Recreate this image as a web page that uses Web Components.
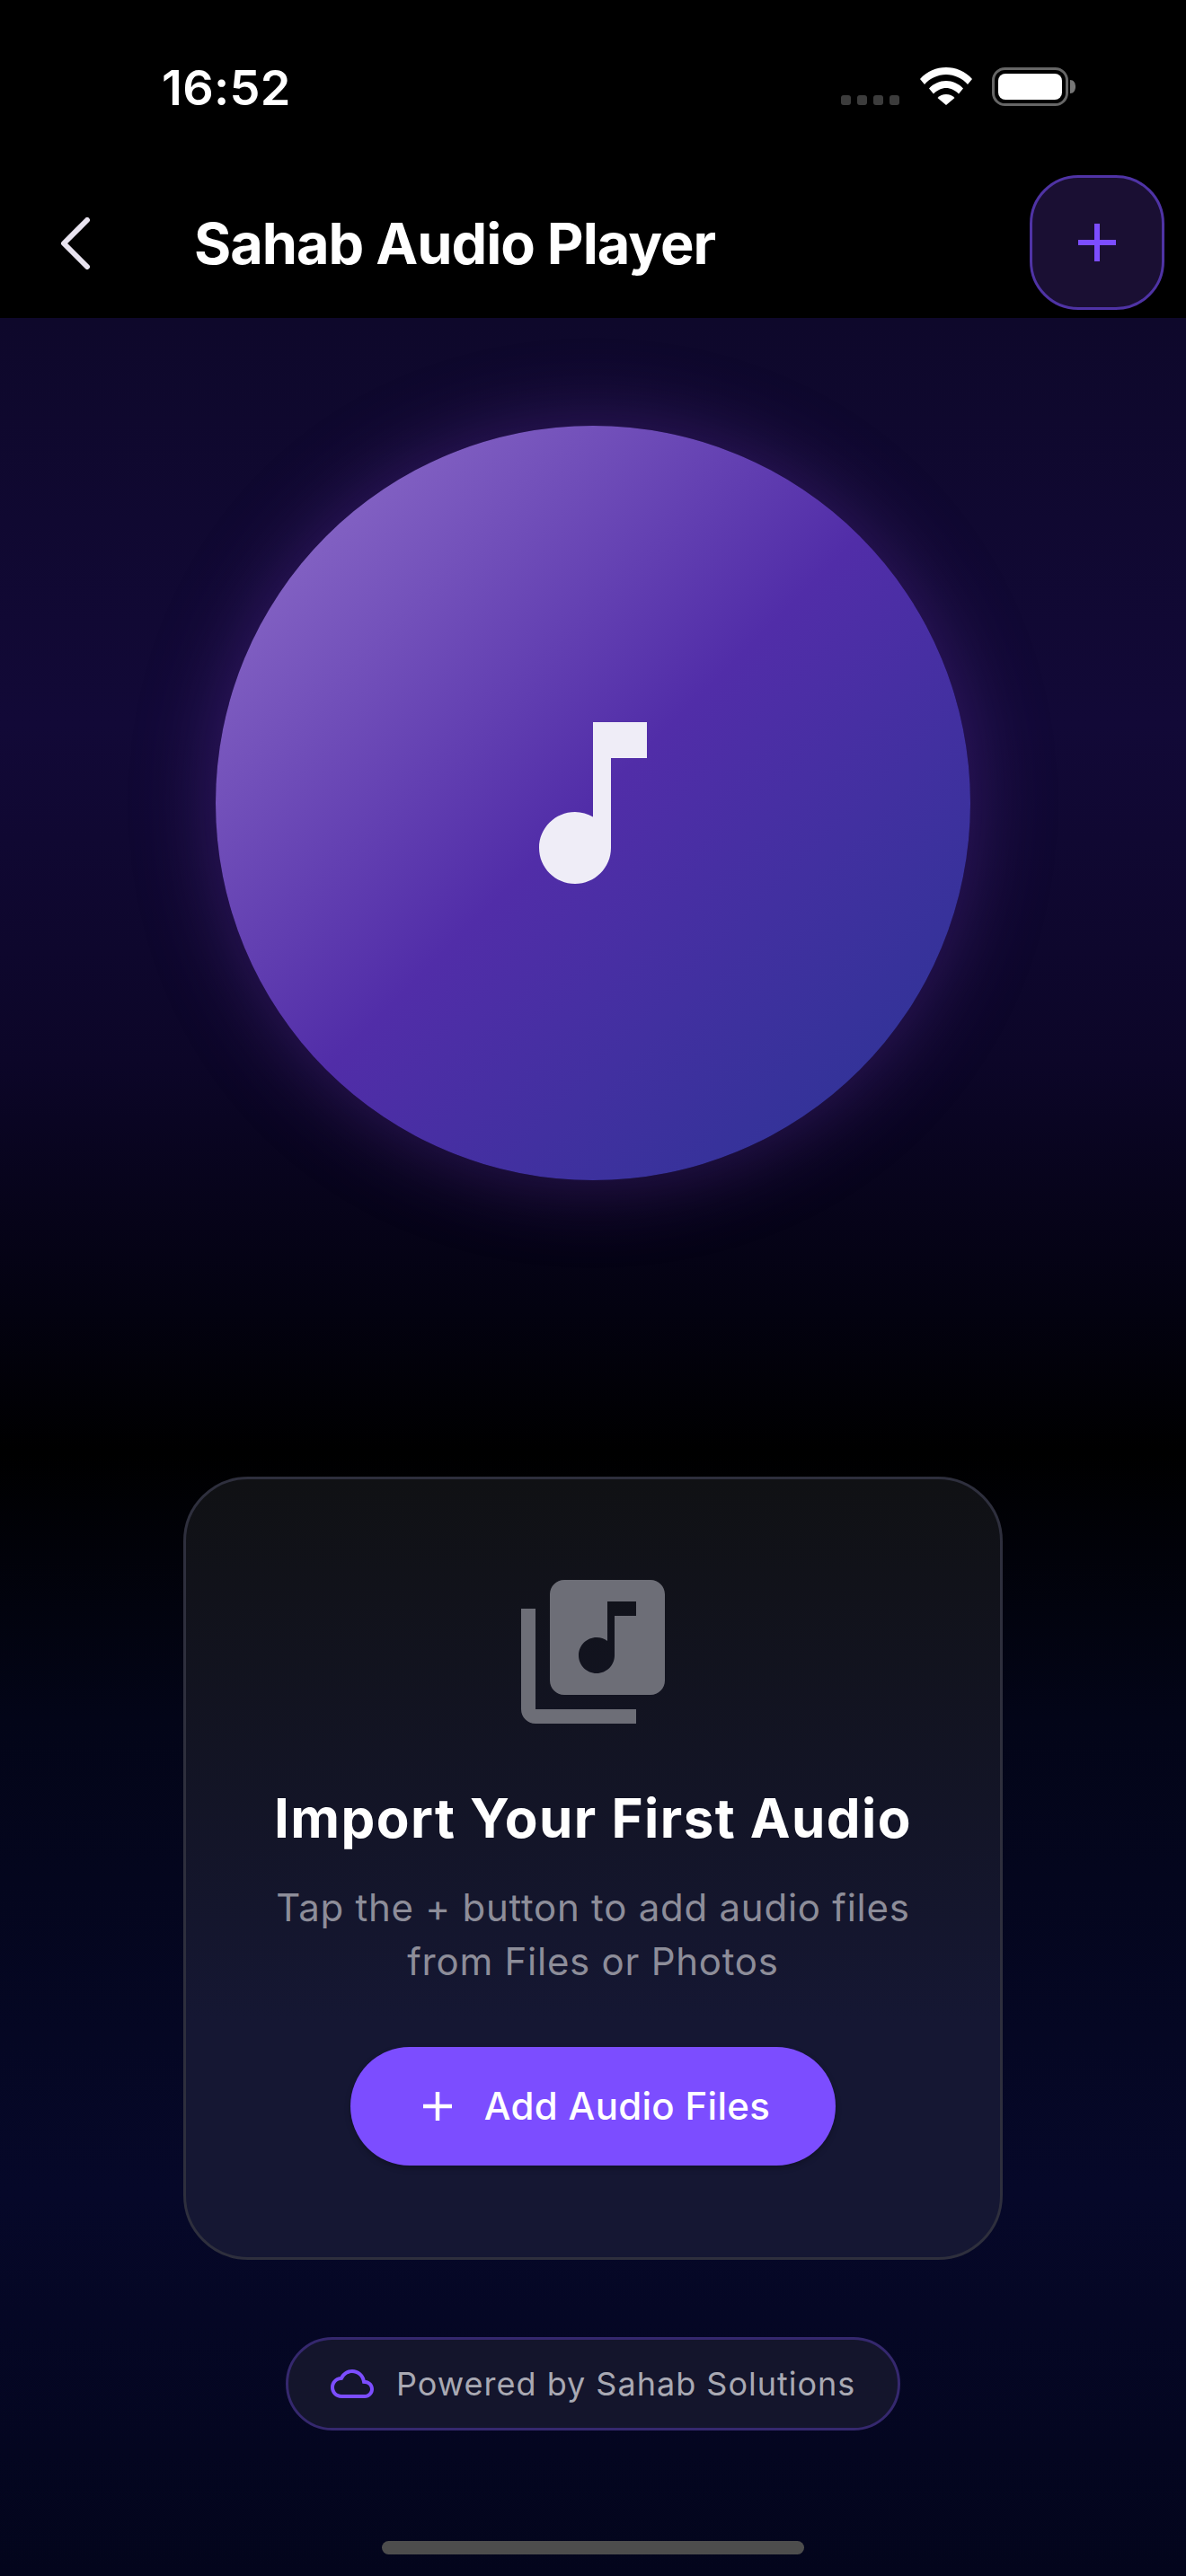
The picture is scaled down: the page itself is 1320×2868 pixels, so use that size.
<!DOCTYPE html>
<html>
<head>
<meta charset="utf-8">
<title>Sahab Audio Player</title>
<style>
  html, body { margin: 0; padding: 0; background: #000; }
  body { width: 1320px; height: 2868px; overflow: hidden; font-family: Inter, "Liberation Sans", sans-serif; }
</style>
</head>
<body>
<audio-app>
  <status-bar slot="top" time="16:52"></status-bar>
  <app-header slot="top" heading="Sahab Audio Player"></app-header>
  <disc-art></disc-art>
  <import-card heading="Import Your First Audio" action="Add Audio Files">
    Tap the + button to add audio files<br>from Files or Photos
  </import-card>
  <powered-pill>Powered by Sahab Solutions</powered-pill>
  <home-bar></home-bar>
</audio-app>

<script>
const appTemplate = document.createElement("template");
appTemplate.innerHTML = `
<style>
:host { display: flex; flex-direction: column; width: 1320px; height: 2868px; background: #000; }
main {
  flex: 1;
  display: flex;
  flex-direction: column;
  align-items: center;
  background: linear-gradient(180deg, #0e082b 0%, #120937 18%, #0c0628 33%, #030210 44%, #000 50.2%, #030518 62%, #060829 83%, #03051c 100%);
}
</style>
<slot name="top"></slot>
<main><slot></slot></main>`;

class AudioApp extends HTMLElement {
  constructor() {
    super();
    this.attachShadow({ mode: "open" });
    this.shadowRoot.appendChild(appTemplate.content.cloneNode(true));
  }
}
customElements.define("audio-app", AudioApp);

const statusTemplate = document.createElement("template");
statusTemplate.innerHTML = `
<style>
:host { display: flex; align-items: flex-start; height: 180px; background: #000; position: relative; }
.time { margin: 69px 0 0 180px; font: 600 54px/58px Inter, sans-serif; color: #fff; letter-spacing: 0.3px; }
.right { margin-left: auto; margin-right: 122px; margin-top: 75px; display: flex; align-items: flex-start; }
.dots { display: flex; gap: 7px; margin: 31px 23px 0 0; }
.dots i { width: 11px; height: 11px; border-radius: 3px; background: #3c3c3c; }
svg { display: block; }
</style>
<div class="time"></div>
<div class="right">
  <div class="dots"><i></i><i></i><i></i><i></i></div>
  <svg width="58" height="42" viewBox="0 0 58 42" style="margin-right:22px">
    <path fill="#fff" d="M29 0C18 0 8 4 0 13l5 6C11 12 20 8 29 8s18 4 24 11l5-6C50 4 40 0 29 0Z"/>
    <path fill="#fff" d="M29 15c-7 0-14 3-19 8.500l5 6c4-4 9-6.500 14-6.500s10 2.500 14 6.500l5-6C43 18 36 15 29 15Z"/>
    <path fill="#fff" d="M29 30c-4 0-7 1.500-9.500 4L29 42l9.500-8c-2.500-2.500-5.500-4-9.500-4Z"/>
  </svg>
  <svg width="94" height="43" viewBox="0 0 94 43">
    <rect x="1.500" y="1.500" width="82" height="40" rx="13" fill="none" stroke="#666" stroke-width="3"/>
    <rect x="7" y="7" width="71" height="29" rx="8" fill="#fff"/>
    <path d="M87 14c4 0 6 3.500 6 7.500S91 29 87 29Z" fill="#777"/>
  </svg>
</div>`;

class StatusBar extends HTMLElement {
  constructor() {
    super();
    this.attachShadow({ mode: "open" });
    this.shadowRoot.appendChild(statusTemplate.content.cloneNode(true));
  }
  connectedCallback() {
    this.shadowRoot.querySelector(".time").textContent = this.getAttribute("time");
  }
}
customElements.define("status-bar", StatusBar);

const headerTemplate = document.createElement("template");
headerTemplate.innerHTML = `
<style>
:host { display: flex; align-items: flex-start; height: 174px; background: #000; }
.back { margin: 62px 0 0 66px; width: 36px; height: 58px; display: block; }
h1 { margin: 53px 0 0 114px; font: 700 63px/76px Inter, sans-serif; letter-spacing: -1px; color: #fff; flex: 1; white-space: nowrap; }
.add {
  box-sizing: border-box;
  width: 150px; height: 150px;
  margin: 15px 24px 0 0;
  border: 3px solid #4f33a5;
  border-radius: 54px;
  background: #1a0f33;
  display: flex; align-items: center; justify-content: center;
}
</style>
<svg class="back" viewBox="0 0 36 58"><path d="M31 3 5 29l26 26" fill="none" stroke="#e8e3ef" stroke-width="6" stroke-linecap="round" stroke-linejoin="round"/></svg>
<h1></h1>
<div class="add">
  <svg width="42" height="42" viewBox="0 0 42 42"><path d="M18 0h6v18h18v6H24v18h-6V24H0v-6h18Z" fill="#7c4dff"/></svg>
</div>`;

class AppHeader extends HTMLElement {
  constructor() {
    super();
    this.attachShadow({ mode: "open" });
    this.shadowRoot.appendChild(headerTemplate.content.cloneNode(true));
  }
  connectedCallback() {
    this.shadowRoot.querySelector("h1").textContent = this.getAttribute("heading");
  }
}
customElements.define("app-header", AppHeader);

const discTemplate = document.createElement("template");
discTemplate.innerHTML = `
<style>
:host { display: block; width: 840px; height: 840px; margin-top: 120px; flex: none; }
.disc {
  width: 840px; height: 840px;
  border-radius: 50%;
  background: linear-gradient(135deg, #9575cd 0%, #512da8 50%, #283593 100%);
  box-shadow: 0 0 90px 0 rgba(124, 60, 200, .35);
  display: flex; align-items: center; justify-content: center;
}
</style>
<div class="disc">
  <svg width="240" height="240" viewBox="0 0 24 24"><path fill="#efedf7" d="M12 3v10.550c-.59-.34-1.270-.55-2-.55-2.210 0-4 1.790-4 4s1.790 4 4 4 4-1.790 4-4V7h4V3h-6z"/></svg>
</div>`;

class DiscArt extends HTMLElement {
  constructor() {
    super();
    this.attachShadow({ mode: "open" });
    this.shadowRoot.appendChild(discTemplate.content.cloneNode(true));
  }
}
customElements.define("disc-art", DiscArt);

const cardTemplate = document.createElement("template");
cardTemplate.innerHTML = `
<style>
:host {
  display: flex; flex-direction: column; align-items: center;
  box-sizing: border-box;
  width: 912px; height: 872px; flex: none;
  margin-top: 330px;
  padding-top: 96px;
  border: 3px solid #2e2f3d;
  border-radius: 72px;
  background: linear-gradient(180deg, #101114 0%, #151733 70%);
  font-family: Inter, sans-serif;
  text-align: center;
}
svg { display: block; }
h2 { margin: 51px 0 0; font: 700 60px/76px Inter, sans-serif; letter-spacing: 1.45px; color: #fff; white-space: nowrap; }
p { margin: 32px 0 0; font: 400 42px/60px Inter, sans-serif; letter-spacing: .75px; color: #8d8d99; }
.btn {
  box-sizing: border-box;
  margin-top: 65px;
  padding-left: 8px;
  width: 540px; height: 132px;
  border-radius: 66px;
  background: #7c4dff;
  display: flex; align-items: center; justify-content: center; gap: 36px;
  color: #fff;
  font: 500 42px/50px Inter, sans-serif;
  letter-spacing: .3px;
  box-shadow: 0 3px 6px rgba(0,0,0,.25);
}
</style>
<svg width="192" height="192" viewBox="0 0 24 24"><path fill="#6d6e77" d="M20 2H8c-1.100 0-2 .9-2 2v12c0 1.100.9 2 2 2h12c1.100 0 2-.9 2-2V4c0-1.100-.9-2-2-2zm-2 5h-3v5.500c0 1.380-1.120 2.500-2.500 2.500S10 13.880 10 12.500s1.120-2.500 2.500-2.500c.57 0 1.080.19 1.500.51V5h4v2zM4 6H2v14c0 1.100.9 2 2 2h14v-2H4V6z"/></svg>
<h2></h2>
<p><slot></slot></p>
<div class="btn">
  <svg width="32" height="32" viewBox="0 0 32 32"><path d="M13.750 0h4.500v13.750H32v4.500H18.250V32h-4.500V18.250H0v-4.500h13.750Z" fill="#fff"/></svg>
  <span class="label"></span>
</div>`;

class ImportCard extends HTMLElement {
  constructor() {
    super();
    this.attachShadow({ mode: "open" });
    this.shadowRoot.appendChild(cardTemplate.content.cloneNode(true));
  }
  connectedCallback() {
    this.shadowRoot.querySelector("h2").textContent = this.getAttribute("heading");
    this.shadowRoot.querySelector(".label").textContent = this.getAttribute("action");
  }
}
customElements.define("import-card", ImportCard);

const pillTemplate = document.createElement("template");
pillTemplate.innerHTML = `
<style>
:host {
  display: flex; align-items: center; gap: 25px;
  box-sizing: border-box;
  width: 684px; height: 104px; flex: none;
  margin-top: 86px;
  padding-left: 47px;
  border: 3px solid #35286e;
  border-radius: 52px;
  background: #14152c;
  color: #a9a9b3;
  font: 400 36px/44px Inter, sans-serif;
  letter-spacing: 1px;
  white-space: nowrap;
}
svg { display: block; flex: none; }
</style>
<svg width="48" height="48" viewBox="0 0 24 24"><path fill="#7c4dff" d="M19.350 10.040C18.670 6.590 15.640 4 12 4 9.110 4 6.600 5.640 5.350 8.040 2.340 8.360 0 10.910 0 14c0 3.310 2.690 6 6 6h13c2.760 0 5-2.240 5-5 0-2.640-2.050-4.780-4.650-4.960zM19 18H6c-2.210 0-4-1.790-4-4 0-2.050 1.530-3.760 3.560-3.970l1.070-.11.5-.95C8.080 7.140 9.940 6 12 6c2.620 0 4.880 1.860 5.390 4.430l.3 1.500 1.530.11c1.560.1 2.780 1.410 2.780 2.960 0 1.650-1.350 3-3 3z"/></svg>
<slot></slot>`;

class PoweredPill extends HTMLElement {
  constructor() {
    super();
    this.attachShadow({ mode: "open" });
    this.shadowRoot.appendChild(pillTemplate.content.cloneNode(true));
  }
}
customElements.define("powered-pill", PoweredPill);

const homeTemplate = document.createElement("template");
homeTemplate.innerHTML = `
<style>
:host { display: block; width: 470px; height: 15px; margin-top: 123px; flex: none; border-radius: 8px; background: #4d4d4d; }
</style>`;

class HomeBar extends HTMLElement {
  constructor() {
    super();
    this.attachShadow({ mode: "open" });
    this.shadowRoot.appendChild(homeTemplate.content.cloneNode(true));
  }
}
customElements.define("home-bar", HomeBar);
</script>
</body>
</html>
